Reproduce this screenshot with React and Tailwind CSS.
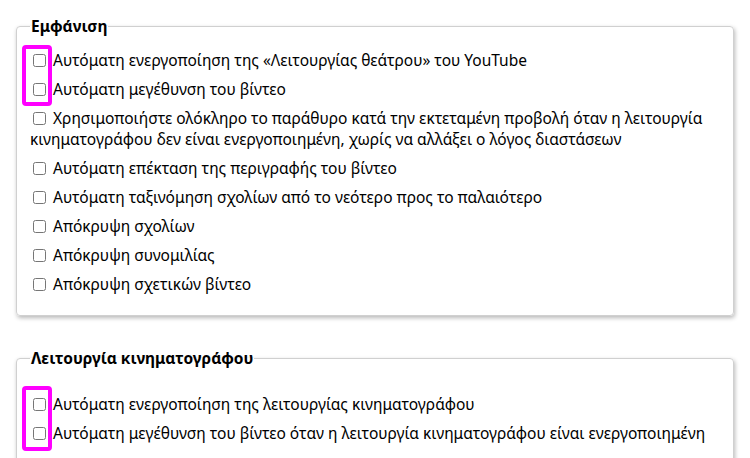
import React from 'react';

const appearance = [
  'Αυτόματη ενεργοποίηση της «Λειτουργίας θεάτρου» του YouTube',
  'Αυτόματη μεγέθυνση του βίντεο',
];

const appearanceRest = [
  'Χρησιμοποιήστε ολόκληρο το παράθυρο κατά την εκτεταμένη προβολή όταν η λειτουργία κινηματογράφου δεν είναι ενεργοποιημένη, χωρίς να αλλάξει ο λόγος διαστάσεων',
  'Αυτόματη επέκταση της περιγραφής του βίντεο',
  'Αυτόματη ταξινόμηση σχολίων από το νεότερο προς το παλαιότερο',
  'Απόκρυψη σχολίων',
  'Απόκρυψη συνομιλίας',
  'Απόκρυψη σχετικών βίντεο',
];

const cinema = [
  'Αυτόματη ενεργοποίηση της λειτουργίας κινηματογράφου',
  'Αυτόματη μεγέθυνση του βίντεο όταν η λειτουργία κινηματογράφου είναι ενεργοποιημένη',
];

function Option({ label }) {
  return (
    <div className="py-1">
      <label className="block">
        <input type="checkbox" className="ml-[3px] mr-[3px] align-[-1px]" /> {label}
      </label>
    </div>
  );
}

function Highlighted({ items, top, height }) {
  return (
    <div className="relative">
      {items.map((t) => (
        <Option key={t} label={t} />
      ))}
      {/* annotation box round the checkboxes */}
      <div
        className="pointer-events-none absolute left-[-8px] w-[30px] rounded-[4px] border-[4px] border-[#ff00ff]"
        style={{ top, height }}
      />
    </div>
  );
}

export default function App() {
  return (
    <div
      className="min-h-screen bg-white px-4 pt-4 text-[15.5px] leading-[21px] text-black"
      style={{ fontFamily: '"Noto Sans", "Open Sans", sans-serif' }}
    >
      <fieldset className="rounded-[4px] border border-[#d0d0d0] px-[13px] pt-[9px] pb-[16px] shadow-[1px_2px_4px_rgba(0,0,0,0.28)]">
        <legend className="px-px font-bold">Εμφάνιση</legend>
        <Highlighted items={appearance} top={-1} height={61} />
        {appearanceRest.map((t) => (
          <Option key={t} label={t} />
        ))}
      </fieldset>

      <fieldset className="mt-[32px] rounded-[4px] border border-[#d0d0d0] px-[13px] pt-[21px] pb-[16px] shadow-[1px_2px_4px_rgba(0,0,0,0.28)]">
        <legend className="px-px font-bold">Λειτουργία κινηματογράφου</legend>
        <Highlighted items={cinema} top={-4} height={65} />
      </fieldset>
    </div>
  );
}
